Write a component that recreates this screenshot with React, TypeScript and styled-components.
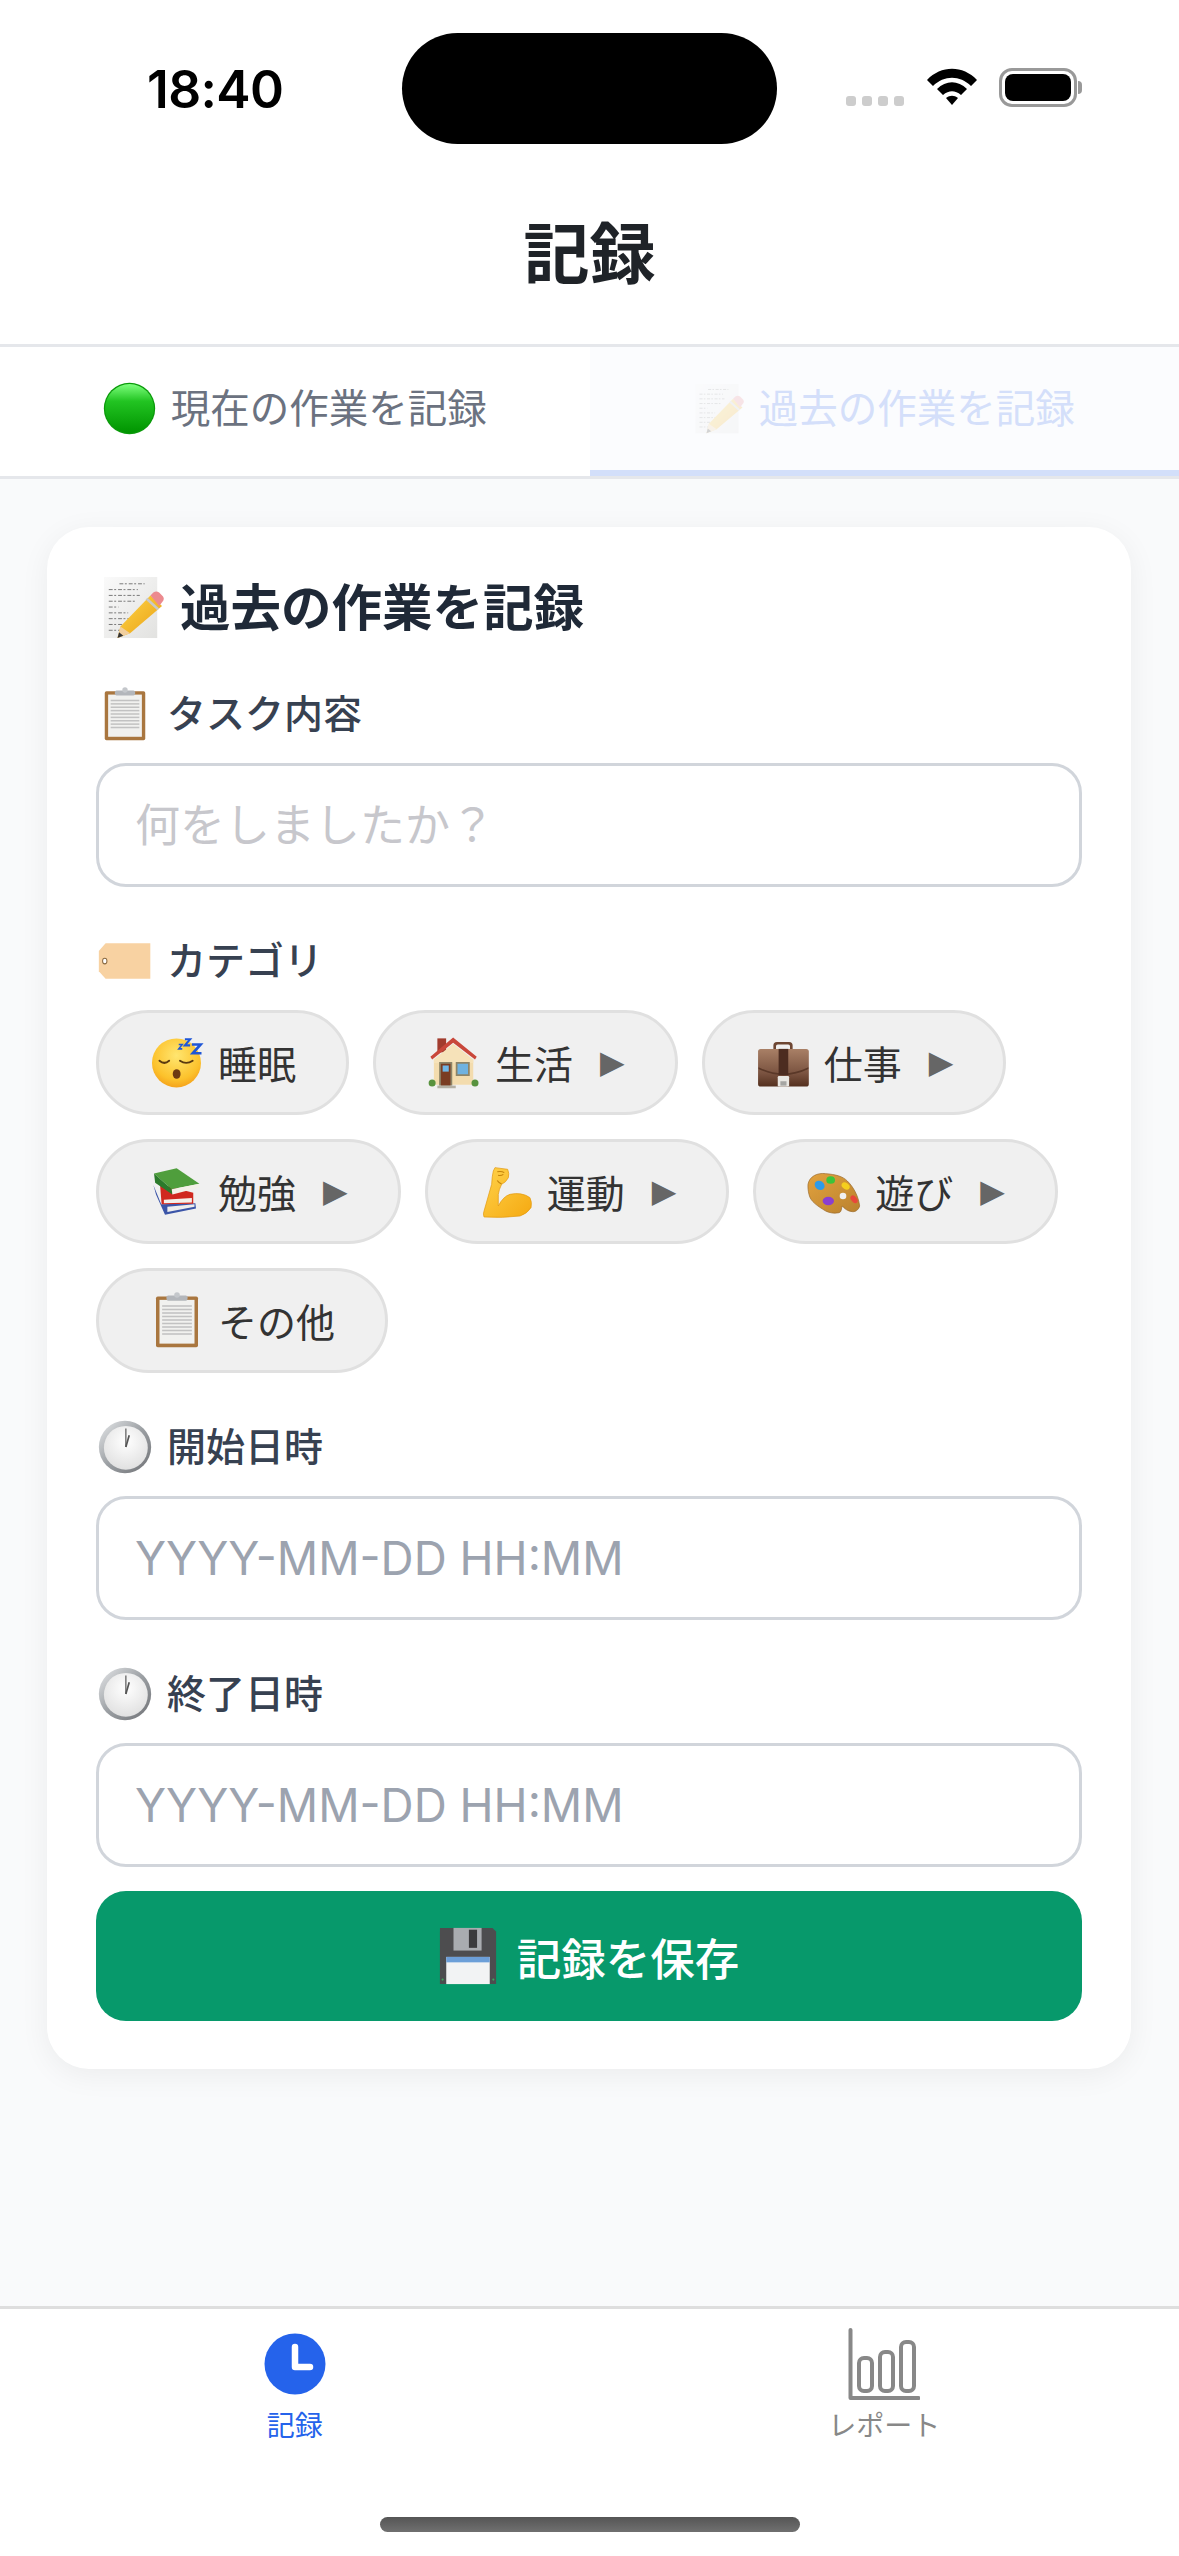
import React from "react";
import styled, { createGlobalStyle } from "styled-components";

const Global = createGlobalStyle`
  html, body { margin: 0; padding: 0; background: #fff; }
  * { box-sizing: border-box; }
  body { font-family: "Inter", "Noto Sans CJK JP", sans-serif; }
  input { font-family: inherit; }
`;

const Page = styled.div`
  width: 1179px;
  height: 2556px;
  display: flex;
  flex-direction: column;
  background: #f9fafb;
  overflow: hidden;
  font-family: "Inter", "Noto Sans CJK JP", sans-serif;
`;
const StatusBar = styled.div`
  height: 170px;
  flex: none;
  background: #fff;
  display: flex;
  align-items: flex-start;
`;
const Time = styled.div`
  width: 402px;
  padding: 61px 0 0 147px;
  font-size: 51.5px;
  line-height: 56px;
  font-weight: 600;
  color: #000;
  letter-spacing: -0.6px;
`;
const Island = styled.div`
  width: 375px;
  height: 111px;
  margin-top: 33px;
  background: #000;
  border-radius: 56px;
  flex: none;
`;
const StatusIcons = styled.div`
  display: flex;
  align-items: flex-start;
  margin-left: 69px;
  padding-top: 68px;
`;
const Dots = styled.div`
  display: flex;
  gap: 6px;
  margin: 28px 23px 0 0;
`;
const Dot = styled.span`
  width: 10px;
  height: 10px;
  border-radius: 3px;
  background: #cdcdcd;
`;
const Battery = styled.div`
  position: relative;
  margin-left: 22px;
  width: 78px;
  height: 39px;
  border: 3px solid #999;
  border-radius: 13px;
  padding: 3px;
  &::after {
    content: "";
    position: absolute;
    right: -8px;
    top: 10px;
    width: 4px;
    height: 13px;
    background: #999;
    border-radius: 0 4px 4px 0;
  }
`;
const BatteryFill = styled.div`
  width: 100%;
  height: 100%;
  background: #000;
  border-radius: 8px;
`;
const TitleBar = styled.header`
  height: 177px;
  flex: none;
  background: #fff;
  border-bottom: 3px solid #e5e7eb;
  display: flex;
  align-items: center;
  justify-content: center;
  padding-bottom: 6px;
`;
const Title = styled.h1`
  margin: 0;
  font-size: 66px;
  line-height: 80px;
  font-weight: 700;
  color: #1f2328;
`;
const Tabs = styled.div`
  display: flex;
  flex: none;
  height: 132px;
  background: #fff;
  border-bottom: 3px solid #e5e7eb;
`;
const Tab = styled.div<{ $selected?: boolean }>`
  flex: 1 1 0;
  min-width: 0;
  display: flex;
  align-items: center;
  justify-content: center;
  gap: 15px;
  background: ${(p) => (p.$selected ? "#fbfcfe" : "#fff")};
  border-bottom: 6px solid ${(p) => (p.$selected ? "#d3dffa" : "transparent")};
  color: ${(p) => (p.$selected ? "#d4dffa" : "#6b7280")};
  font-size: 39.5px;
  line-height: 50px;
`;
const TabIcon = styled.span<{ $selected?: boolean }>`
  display: flex;
  opacity: ${(p) => (p.$selected ? 0.2 : 1)};
`;
const Main = styled.main`
  flex: 1;
  padding: 48px 48px 0 47px;
`;
const Card = styled.section`
  background: #fff;
  border-radius: 42px;
  padding: 48px 49px 48px 49px;
  box-shadow: 0 6px 30px rgba(0, 0, 0, 0.06);
`;
const CardTitle = styled.h2`
  margin: 0 0 46px;
  display: flex;
  align-items: center;
  gap: 16px;
  padding-left: 6px;
  font-size: 50.5px;
  line-height: 66px;
  font-weight: 700;
  color: #1f2937;
`;
const Field = styled.div<{ $last?: boolean }>`
  margin-bottom: ${(p) => (p.$last ? "24px" : "47px")};
`;
const Label = styled.div`
  display: flex;
  align-items: center;
  gap: 15px;
  padding: 0 0 6px 2px;
  height: 54px;
  margin-bottom: 22px;
  font-size: 39px;
  font-weight: 500;
  color: #374151;
`;
const LabelIcon = styled.span`
  display: flex;
  margin-top: 6px;
`;
const Input = styled.input<{ $cjk?: boolean }>`
  display: block;
  width: 100%;
  height: 124px;
  border: 3px solid #d1d5db;
  border-radius: 30px;
  padding: 0 36px;
  background: #fff;
  font-size: ${(p) => (p.$cjk ? "45px" : "45.8px")};
  outline: none;
  &::placeholder {
    color: ${(p) => (p.$cjk ? "#c7c7cc" : "#9ca3af")};
    opacity: 1;
  }
`;
const Chips = styled.div`
  display: flex;
  flex-wrap: wrap;
  gap: 24px;
`;
const Chip = styled.div`
  height: 105px;
  display: flex;
  align-items: center;
  gap: 13px;
  border: 3px solid #e0e0e0;
  border-radius: 54px;
  background: #f0f0f0;
  padding: 0 50px 2px 50px;
  color: #333;
  font-size: 39px;
`;
const Arrow = styled.span`
  font-family: "DejaVu Sans", sans-serif;
  font-size: 32px;
  line-height: 1;
  color: #666;
  margin-left: 14px;
`;
const SaveButton = styled.button`
  width: 100%;
  height: 130px;
  display: flex;
  align-items: center;
  justify-content: center;
  gap: 20px;
  border: 0;
  border-radius: 30px;
  background: #07996b;
  color: #fff;
  font-family: inherit;
  font-size: 44.5px;
  font-weight: 500;
  padding: 0;
`;
const BottomBar = styled.nav`
  flex: none;
  height: 250px;
  background: #fff;
  border-top: 3px solid #dedede;
  display: flex;
  flex-direction: column;
`;
const NavItems = styled.div`
  display: flex;
  padding-top: 19px;
`;
const NavItem = styled.div<{ $active?: boolean }>`
  flex: 1;
  display: flex;
  flex-direction: column;
  align-items: center;
  gap: 8px;
  font-size: 28px;
  line-height: 36px;
  color: ${(p) => (p.$active ? "#2563eb" : "#888")};
`;
const HomeIndicator = styled.div`
  width: 420px;
  height: 15px;
  margin: auto auto 24px;
  border-radius: 8px;
  background: linear-gradient(#555, #707070);
`;

const Em = ({ s, children }: { s: number; children: React.ReactNode }) => (
  <svg width={s} height={s} viewBox="0 0 64 64" style={{ flex: "none", display: "block" }}>
    {children}
  </svg>
);

const GreenCircle = ({ s }: { s: number }) => (
  <Em s={s}>
    <defs>
      <linearGradient id="gc" x1="0" y1="0" x2="0" y2="1">
        <stop offset="0" stopColor="#7dff7d" />
        <stop offset="0.35" stopColor="#22c422" />
        <stop offset="1" stopColor="#009400" />
      </linearGradient>
    </defs>
    <circle cx="32" cy="32" r="31" fill="#0a9a0a" />
    <circle cx="32" cy="32" r="29.5" fill="url(#gc)" />
  </Em>
);

const Memo = ({ s }: { s: number }) => (
  <Em s={s}>
    <defs>
      <linearGradient id="mp" x1="0" y1="0" x2="1" y2="1">
        <stop offset="0" stopColor="#fafafa" />
        <stop offset="1" stopColor="#e2e2e0" />
      </linearGradient>
      <linearGradient id="pc" x1="0" y1="0" x2="1" y2="1">
        <stop offset="0" stopColor="#ffd84a" />
        <stop offset="1" stopColor="#e89d12" />
      </linearGradient>
    </defs>
    <rect x="2" y="0" width="55" height="63" fill="url(#mp)" />
    {[7, 13, 19, 25, 31, 37, 43, 49, 55].map((y, i) => (
      <path
        key={y}
        d={`M${i === 0 ? 18 : 7} ${y}h${[26, 30, 32, 28, 10, 20, 22, 18, 12][i]}`}
        stroke="#777"
        strokeWidth="1"
        strokeDasharray="4 1.6 2 2"
      />
    ))}
    <path d="M50 19l12 11-33 28-13 5 3-12z" fill="url(#pc)" />
    <path d="M19 51l-3 12 13-5z" fill="#f1cf9f" />
    <path d="M17.6 57l-1.6 6 6-2.4z" fill="#333" />
    <path d="M50 19l3-3q3-2 6 0l4 4q2 3-1 6l-3 4z" fill="#ec8a8f" />
    <path d="M47 21.5l12 11-2 1.8-12-11z" fill="#c9c9c9" />
  </Em>
);

const Clipboard = ({ s }: { s: number }) => (
  <Em s={s}>
    <rect x="8" y="5" width="48" height="58" rx="2" fill="#a9763f" />
    <rect x="12" y="9" width="40" height="50" fill="#f1f1ef" />
    {[16, 20, 24, 28, 32, 36, 40, 44, 48].map((y) => (
      <path key={y} d={`M15 ${y}h34`} stroke="#c2c2c2" strokeWidth="1.8" />
    ))}
    <rect x="20" y="4" width="24" height="6" rx="2" fill="#b3b6bb" />
    <circle cx="32" cy="3.5" r="3.2" fill="#c4c7cb" />
  </Em>
);

const Tag = ({ s }: { s: number }) => (
  <Em s={s}>
    <path d="M9 11h53v42H9l-8-9V20z" fill="#f8d2a2" />
    <ellipse cx="8" cy="32" rx="2.6" ry="3.4" fill="#fff" stroke="#8a6a42" strokeWidth="1.2" />
  </Em>
);

const Sleeping = ({ s }: { s: number }) => (
  <Em s={s}>
    <defs>
      <radialGradient id="sl" cx="0.5" cy="0.35" r="0.7">
        <stop offset="0" stopColor="#ffe670" />
        <stop offset="0.7" stopColor="#fcc22c" />
        <stop offset="1" stopColor="#f39a17" />
      </radialGradient>
    </defs>
    <circle cx="31.4" cy="33" r="28" fill="url(#sl)" />
    <path d="M12 30.5q5.5 5 11 0M35.4 30.5q7 5 14.5 0" fill="none" stroke="#5a3a10" strokeWidth="2.2" strokeLinecap="round" />
    <ellipse cx="31.6" cy="45.7" rx="4.5" ry="5.5" fill="#6d3a12" />
    <g fill="none" stroke="#1f56d6" strokeLinejoin="miter">
      <path d="M34 12h4l-4 5h4" strokeWidth="1.8" />
      <path d="M41 6h6l-6 7h6" strokeWidth="2.4" />
      <path d="M49 12h10l-9 10h10" strokeWidth="3" />
    </g>
  </Em>
);

const House = ({ s }: { s: number }) => (
  <Em s={s}>
    <rect x="13" y="5" width="10" height="16" fill="#a13c2e" />
    <rect x="9" y="29" width="45" height="29" fill="#f3dcae" />
    <path d="M31 11L9 29v4h45v-4z" fill="#f6e2b9" />
    <path d="M31 4L5 26l2 3L31 10l25 19 2-3z" fill="#c9473a" />
    <rect x="15" y="32" width="15" height="27" fill="#8d8468" />
    <rect x="17" y="34" width="11" height="25" fill="#7a3c22" />
    <rect x="19" y="36" width="7" height="7" fill="#6fb6e6" />
    <rect x="34" y="32" width="16" height="16" fill="#8d8468" />
    <rect x="36" y="34" width="12" height="12" fill="#6fb2e0" />
    <rect x="13" y="59" width="21" height="3" fill="#b4b0a4" />
    <circle cx="7" cy="56" r="4" fill="#58923e" />
    <circle cx="56" cy="56" r="4" fill="#58923e" />
  </Em>
);

const Briefcase = ({ s }: { s: number }) => (
  <Em s={s}>
    <defs>
      <linearGradient id="bc" x1="0" y1="0" x2="0" y2="1">
        <stop offset="0" stopColor="#a98066" />
        <stop offset="0.65" stopColor="#7a5340" />
        <stop offset="1" stopColor="#54301f" />
      </linearGradient>
    </defs>
    <path d="M21 18v-5q0-4 4-4h14q4 0 4 4v5h-3v-4q0-2-2-2H26q-2 0-2 2v4z" fill="#6d4632" />
    <rect x="3.5" y="17" width="58" height="43" rx="3" fill="url(#bc)" />
    <path d="M4 38q28 14 57 0v2q-28 14-57 0z" fill="#5a3828" />
    <rect x="27" y="17" width="11" height="30" fill="#4c2c20" />
    <rect x="26" y="48" width="13" height="12" rx="1.5" fill="#e9e7e2" />
    <rect x="29" y="54" width="7" height="5" fill="#a5a5a2" />
  </Em>
);

const Books = ({ s }: { s: number }) => (
  <Em s={s}>
    <path d="M5 25l9 22 39-1 .7 6-35.4 7L8 36z" fill="#3b55a8" />
    <path d="M21 50l31-3v3l-31 6z" fill="#eeeeee" />
    <path d="M12.6 24.4l38 9.5v12.6l-36.2.7z" fill="#d0281f" />
    <path d="M17 42l32-2v5l-32 1z" fill="#f4f1ea" />
    <path d="M5.7 12L31.6 6l26 17.6L26 30z" fill="#4f9e3c" />
    <path d="M5.7 12L26 30l.7 6L7 22.5z" fill="#2b7a2b" />
    <path d="M26 30l31.5-6.4v4.4L26.7 36z" fill="#f3f1e8" />
  </Em>
);

const Muscle = ({ s }: { s: number }) => (
  <Em s={s}>
    <defs>
      <linearGradient id="mu" x1="0" y1="0" x2="1" y2="1">
        <stop offset="0" stopColor="#ffd24a" />
        <stop offset="1" stopColor="#f5a911" />
      </linearGradient>
    </defs>
    <path
      d="M19.4 5.3L33.9 7.2Q36 12 34.7 16.8Q32 22 27 24.4Q24 30 23.2 35.8L23.2 49.1Q29 38 36.6 35.8Q50 33 59.4 39.6Q62 45 60.6 51Q56 58 48 60.6Q28 63 6.9 61.7Q5.5 58 6.9 54.9L15.6 24.4Q16 15 17.5 9.1z"
      fill="url(#mu)"
      stroke="#e39a10"
      strokeWidth="0.8"
    />
    <path d="M22 10q5-1 8 1M23 14q3 1 6-1M27 24q-3-1-5-4" fill="none" stroke="#c4830a" strokeWidth="1.3" />
  </Em>
);

const Palette = ({ s }: { s: number }) => (
  <Em s={s}>
    <defs>
      <linearGradient id="pl" x1="0" y1="0" x2="1" y2="1">
        <stop offset="0" stopColor="#e2a23e" />
        <stop offset="1" stopColor="#b9812e" />
      </linearGradient>
    </defs>
    <path
      d="M2.3 24.4C4 15 13 11 22.5 12.2C33 13 42 15 47.2 20.6C54 27 60 38 61.3 49.1C60 54 56 56 53 55.6C47 55 44 52 41.5 49.1C40 52 41 56 37.7 56.8C32 58 27 57 22.5 54.9C13 49 5 44 3.4 35.8C2.5 32 2 28 2.3 24.4z"
      fill="url(#pl)"
      stroke="#99682a"
      strokeWidth="0.8"
    />
    <circle cx="42.3" cy="37.7" r="3.8" fill="#f0f0f0" />
    <ellipse cx="15.6" cy="25.5" rx="6" ry="5" fill="#2e9be8" transform="rotate(35 15.6 25.5)" />
    <ellipse cx="28.2" cy="19.4" rx="5" ry="4.4" fill="#3cc43a" />
    <ellipse cx="45.3" cy="26.3" rx="5" ry="3.6" fill="#f5cf1e" transform="rotate(35 45.3 26.3)" />
    <ellipse cx="25.5" cy="43.4" rx="6.5" ry="4.8" fill="#8a3fd0" />
    <ellipse cx="54.9" cy="41.5" rx="5" ry="3.2" fill="#e8473a" transform="rotate(50 54.9 41.5)" />
  </Em>
);

const Clock = ({ s }: { s: number }) => (
  <Em s={s}>
    <defs>
      <linearGradient id="ck" x1="0" y1="0" x2="1" y2="1">
        <stop offset="0" stopColor="#e6e8ea" />
        <stop offset="0.5" stopColor="#9b9fa3" />
        <stop offset="1" stopColor="#6f7175" />
      </linearGradient>
      <radialGradient id="cf" cx="0.5" cy="0.35" r="0.75">
        <stop offset="0" stopColor="#fff" />
        <stop offset="1" stopColor="#dcdcdc" />
      </radialGradient>
    </defs>
    <circle cx="32" cy="32" r="31" fill="url(#ck)" />
    <circle cx="33" cy="33" r="26" fill="url(#cf)" />
    <path d="M33 10v22" stroke="#7a7a7a" strokeWidth="1.8" />
    <path d="M33 32l4-14" stroke="#555" strokeWidth="2" />
  </Em>
);

const Floppy = ({ s }: { s: number }) => (
  <Em s={s}>
    <path d="M1 1h58l4 4v58H1z" fill="#4d4d4f" />
    <rect x="16" y="1" width="31" height="25" fill="#a9acb0" />
    <rect x="33" y="3" width="9" height="20" fill="#3b3b3d" />
    <rect x="8" y="33" width="48" height="30" fill="#f2f3f4" />
    <rect x="8" y="33" width="48" height="6" fill="#6c9fd8" />
    <circle cx="4" cy="58" r="1.2" fill="#3ea85e" />
    <circle cx="60" cy="58" r="1.2" fill="#3ea85e" />
  </Em>
);

const Wifi = () => (
  <svg width="50" height="38" viewBox="0 0 50 38">
    <path d="M0 12C14-3 36-3 50 12l-6 6C33 7 17 7 6 18z" fill="#000" />
    <path d="M10 21c9-9 21-9 30 0l-6 6c-6-5-12-5-18 0z" fill="#000" />
    <path d="M19 30c4-3 8-3 12 0l-6 7z" fill="#000" />
  </svg>
);

const ClockTab = () => (
  <svg width="72" height="72" viewBox="0 0 72 72" style={{ display: "block" }}>
    <circle cx="36" cy="36" r="30.5" fill="#2563eb" />
    <path d="M36 19v20h15" fill="none" stroke="#fff" strokeWidth="6.5" strokeLinecap="round" strokeLinejoin="round" />
  </svg>
);

const ChartTab = () => (
  <svg width="72" height="72" viewBox="0 0 72 72" style={{ display: "block" }}>
    <g fill="none" stroke="#888" strokeWidth="4" strokeLinecap="round" strokeLinejoin="round">
      <path d="M2.5 2v68h68" />
      <rect x="11" y="30" width="13" height="33" rx="5" />
      <rect x="32" y="24" width="13" height="39" rx="5" />
      <rect x="53" y="14" width="13" height="49" rx="5" />
    </g>
  </svg>
);

const categories: { name: string; icon: React.ReactNode; more?: boolean }[] = [
  { name: "睡眠", icon: <Sleeping s={56} /> },
  { name: "生活", icon: <House s={56} />, more: true },
  { name: "仕事", icon: <Briefcase s={56} />, more: true },
  { name: "勉強", icon: <Books s={56} />, more: true },
  { name: "運動", icon: <Muscle s={56} />, more: true },
  { name: "遊び", icon: <Palette s={56} />, more: true },
  { name: "その他", icon: <Clipboard s={56} /> },
];

export default function App() {
  return (
    <Page>
      <Global />
      <StatusBar>
        <Time>18:40</Time>
        <Island />
        <StatusIcons>
          <Dots>
            <Dot />
            <Dot />
            <Dot />
            <Dot />
          </Dots>
          <Wifi />
          <Battery>
            <BatteryFill />
          </Battery>
        </StatusIcons>
      </StatusBar>
      <TitleBar>
        <Title>記録</Title>
      </TitleBar>
      <Tabs>
        <Tab>
          <GreenCircle s={53} />
          現在の作業を記録
        </Tab>
        <Tab $selected>
          <TabIcon $selected>
            <Memo s={50} />
          </TabIcon>
          過去の作業を記録
        </Tab>
      </Tabs>
      <Main>
        <Card>
          <CardTitle>
            <Memo s={62} />
            過去の作業を記録
          </CardTitle>
          <Field>
            <Label>
              <LabelIcon>
                <Clipboard s={54} />
              </LabelIcon>
              タスク内容
            </Label>
            <Input $cjk placeholder="何をしましたか？" />
          </Field>
          <Field>
            <Label>
              <LabelIcon>
                <Tag s={54} />
              </LabelIcon>
              カテゴリ
            </Label>
            <Chips>
              {categories.map((c) => (
                <Chip key={c.name}>
                  {c.icon}
                  {c.name}
                  {c.more && <Arrow>▶</Arrow>}
                </Chip>
              ))}
            </Chips>
          </Field>
          <Field>
            <Label>
              <LabelIcon>
                <Clock s={54} />
              </LabelIcon>
              開始日時
            </Label>
            <Input placeholder="YYYY-MM-DD HH:MM" />
          </Field>
          <Field $last>
            <Label>
              <LabelIcon>
                <Clock s={54} />
              </LabelIcon>
              終了日時
            </Label>
            <Input placeholder="YYYY-MM-DD HH:MM" />
          </Field>
          <SaveButton>
            <Floppy s={58} />
            記録を保存
          </SaveButton>
        </Card>
      </Main>
      <BottomBar>
        <NavItems>
          <NavItem $active>
            <ClockTab />
            記録
          </NavItem>
          <NavItem>
            <ChartTab />
            レポート
          </NavItem>
        </NavItems>
        <HomeIndicator />
      </BottomBar>
    </Page>
  );
}
